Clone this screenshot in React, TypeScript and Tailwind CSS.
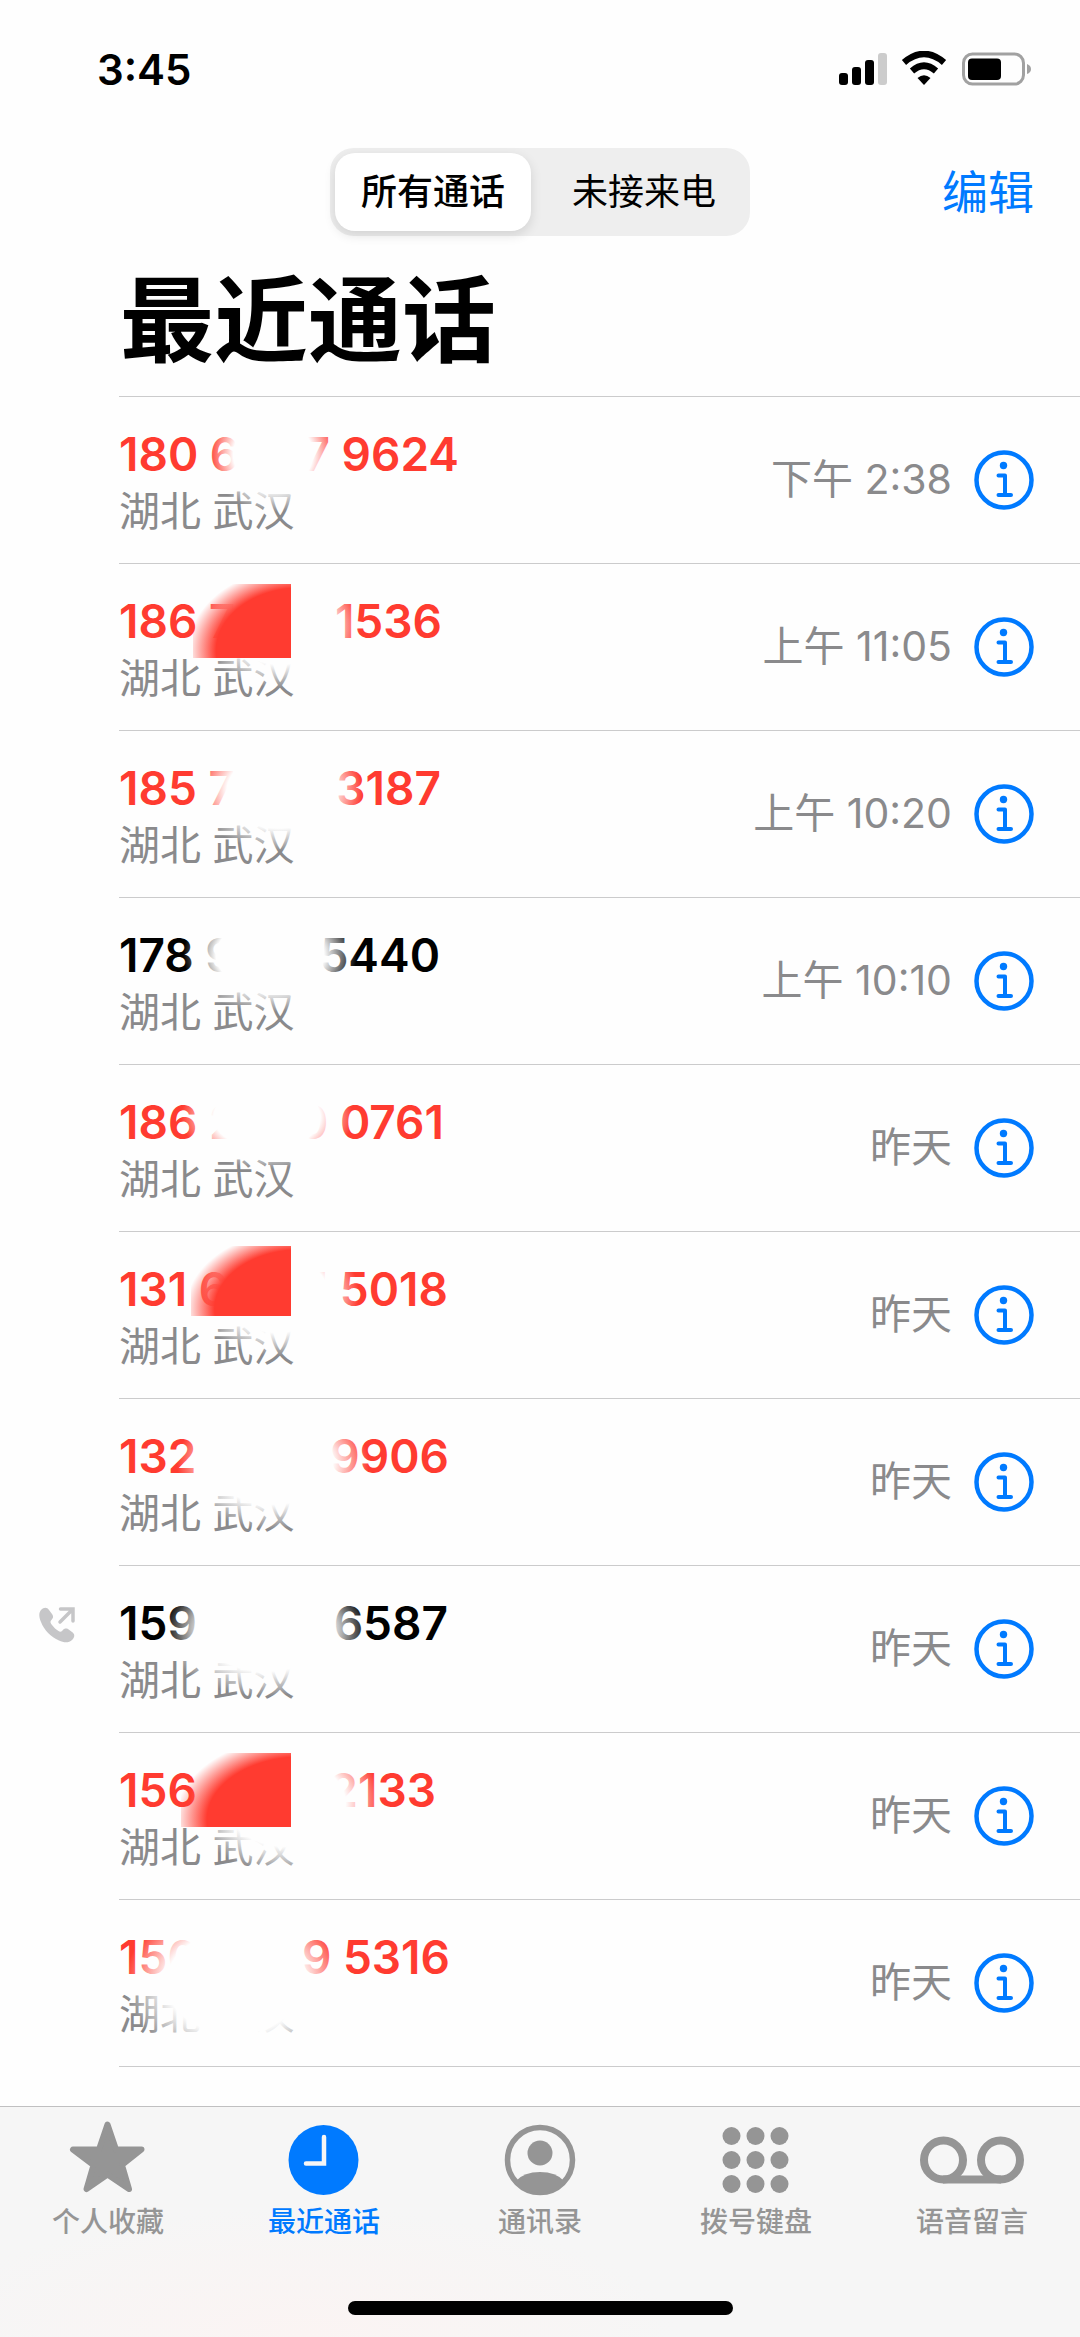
import { useState, ReactNode } from "react";

interface CallInterface {
    head: string,
    tail: string,
    time: string,
    missed: boolean,
    outgoing?: boolean,
    width: string,
    blur: string,
    blot?: string
}

interface TabInterface {
    name: string,
    icon: ReactNode
}

const calls: Array<CallInterface> = [
    { head: '180 6', tail: '7 9624', time: '下午 2:38', missed: true, width: 'w-[340px]', blur: 'left-[90px] top-0 w-[128px] h-[115px]' },
    { head: '186 7', tail: '1536', time: '上午 11:05', missed: true, width: 'w-[323px]', blur: 'left-[81px] top-0 w-[160px] h-[124px]', blot: 'left-[74px] top-[20px] w-[98px] h-[74px]' },
    { head: '185 7', tail: '3187', time: '上午 10:20', missed: true, width: 'w-[322px]', blur: 'left-[76px] top-0 w-[168px] h-[120px]' },
    { head: '178 9', tail: '5440', time: '上午 10:10', missed: false, width: 'w-[321px]', blur: 'left-[64px] top-0 w-[174px] h-[114px]' },
    { head: '186 2', tail: '0 0761', time: '昨天', missed: true, width: 'w-[325px]', blur: 'left-[62px] top-0 w-[172px] h-[104px]' },
    { head: '131 6', tail: '1 5018', time: '昨天', missed: true, width: 'w-[329px]', blur: 'left-[76px] top-0 w-[164px] h-[124px]', blot: 'left-[72px] top-[14px] w-[100px] h-[70px]' },
    { head: '132', tail: '1 9906', time: '昨天', missed: true, width: 'w-[330px]', blur: 'left-[58px] top-0 w-[192px] h-[130px]' },
    { head: '159', tail: '6587', time: '昨天', missed: false, outgoing: true, width: 'w-[329px]', blur: 'left-[44px] top-0 w-[206px] h-[130px]' },
    { head: '156', tail: '2133', time: '昨天', missed: true, width: 'w-[317px]', blur: 'left-[71px] top-0 w-[192px] h-[140px]', blot: 'left-[62px] top-[20px] w-[110px] h-[74px]' },
    { head: '150', tail: '9 5316', time: '昨天', missed: true, width: 'w-[331px]', blur: 'left-[6px] top-0 w-[220px] h-[165px]' },
]

const tabs: Array<TabInterface> = [
    {
        name: '个人收藏',
        icon: <svg width="80" height="80" viewBox="0 0 80 80" fill="currentColor" stroke="currentColor" strokeWidth="6" strokeLinejoin="round">
            <path d="M39.500 4.500 L48 29.500 H73.500 L54 45 L61 69 L39.500 54.500 L18.500 69 L25.500 45 L5 29.500 H31 Z" />
        </svg>
    },
    {
        name: '最近通话',
        icon: <svg width="80" height="80" viewBox="0 0 80 80" fill="none">
            <circle cx="39.500" cy="40" r="35" fill="currentColor" />
            <path d="M40 17 V43.500 H22" stroke="#f6f6f6" strokeWidth="4.500" strokeLinecap="round" />
        </svg>
    },
    {
        name: '通讯录',
        icon: <svg width="80" height="80" viewBox="0 0 80 80" fill="none">
            <circle cx="40" cy="40" r="32.500" stroke="currentColor" strokeWidth="5.500" />
            <circle cx="40" cy="33" r="12.500" fill="currentColor" />
            <path d="M16 61 Q24 52 40 52 Q56 52 64 61 Q54 73 40 73 Q26 73 16 61 Z" fill="currentColor" />
        </svg>
    },
    {
        name: '拨号键盘',
        icon: <svg width="80" height="80" viewBox="0 0 80 80" fill="currentColor">
            {[16, 40, 64].map((y) => [15.5, 39.5, 63.5].map((x) => (
                <circle key={`${x}-${y}`} cx={x} cy={y} r="9" />
            )))}
        </svg>
    },
    {
        name: '语音留言',
        icon: <svg width="108" height="80" viewBox="0 0 108 80" fill="none" stroke="currentColor" strokeWidth="8">
            <circle cx="25.500" cy="40" r="19.500" />
            <circle cx="82.500" cy="40" r="19.500" />
            <path d="M25 59.500 H83" />
        </svg>
    },
]

function StatusBar() {
    return (
        <div className="h-[138px] pl-[97px] pr-12 flex items-center justify-between">
            <span className="text-[42px] font-semibold">3:45</span>
            <svg width="194" height="36" viewBox="0 0 194 36">
                <rect x="1" y="22" width="9" height="12" rx="3" />
                <rect x="14" y="16" width="9" height="18" rx="3" />
                <rect x="27" y="9" width="9" height="25" rx="3" />
                <rect x="40" y="2" width="9" height="32" rx="3" fill="#cccccc" />
                <path d="M66 11.500 Q86 -5.500 106 11.500" fill="none" stroke="#000" strokeWidth="6.500" />
                <path d="M74 20 Q86 9.500 98 20" fill="none" stroke="#000" strokeWidth="6.500" />
                <path d="M79.500 27 Q86 21.500 92.500 27 L86 34 Z" />
                <rect x="125.500" y="3" width="60" height="30" rx="9" fill="none" stroke="#a1a1a1" strokeWidth="3" />
                <rect x="130" y="7.500" width="33" height="21.500" rx="4" />
                <path d="M189 13 Q193 14.500 193 18 Q193 21.500 189 23 Z" fill="#a1a1a1" />
            </svg>
        </div>
    )
}

function OutgoingIcon() {
    return (
        <svg width="38" height="38" viewBox="0 0 38 38" className="text-[#c6c6c8]">
            <path d="M3 4 C6 1 9 1 11 4 L14 8 C16 11 15 12 13 14.500 C12 16 12.500 17 14 19 C16 21.500 18 23.500 20.500 25 C22 26 23 26 24.500 24.500 C26 22.500 28 22 30 23 L34 26 C37 28 37 31 34 34 C31 37 26 37 21 34.500 C13 31 6 24 3 16 C1 11 0.500 7 3 4 Z" fill="currentColor" />
            <path d="M22.500 3 H35 V15 M34 4 L22 16" fill="none" stroke="currentColor" strokeWidth="3.500" strokeLinecap="round" />
        </svg>
    )
}

function InfoIcon() {
    return (
        <svg width="60" height="60" viewBox="0 0 60 60" fill="none" stroke="currentColor">
            <circle cx="30" cy="30" r="27.500" strokeWidth="4.500" />
            <circle cx="29.500" cy="15.500" r="3.700" fill="currentColor" stroke="none" />
            <path d="M24.500 25.500 H31 V45 M24.500 45 H37" strokeWidth="4" strokeLinecap="round" strokeLinejoin="round" />
        </svg>
    )
}

export default function App() {

    const [filter, setFilter] = useState('所有通话');
    const [activeTab, setActiveTab] = useState('最近通话');

    return (
        <div className="min-h-screen flex flex-col bg-[#fefefe] text-black font-['Inter','Noto_Sans_CJK_SC',sans-serif]">
            <StatusBar />

            {/* Navigation */}
            <header className="h-[108px] px-[46px] grid grid-cols-[1fr_420px_1fr] items-center">
                <div className="col-start-2 h-[88px] p-[5px] grid grid-cols-[196px_1fr] gap-3 rounded-3xl bg-[#eeeeee]">
                    {
                        ['所有通话', '未接来电'].map((e) => (
                            <button key={e} type="button" onClick={() => { setFilter(e) }}
                                className={`rounded-[20px] text-4xl ${filter == e ? 'bg-white font-medium shadow-[0_4px_12px_rgba(0,0,0,0.12)]' : ''}`}>
                                {e}
                            </button>
                        ))
                    }
                </div>
                <button type="button" className="justify-self-end text-[46px] text-[#007aff]">编辑</button>
            </header>
            {/* End of Navigation */}

            <h1 className="h-[150px] pl-[120px] text-[94px] leading-[150px] font-bold">最近通话</h1>

            <main className="flex-1">
                <div className="ml-[119px] h-px bg-[#cbcbcc]"></div>
                <ul>
                    {
                        calls.map((call) => (
                            <li key={call.tail} className="h-[167px] flex">
                                <div className="w-[119px] pt-10 pl-[38px]">
                                    {call.outgoing ? <OutgoingIcon /> : <></>}
                                </div>
                                <div className="relative flex-1 flex items-center border-b border-[#cbcbcc] pr-[46px]">
                                    <div className="flex-1 pt-[6px]">
                                        <div className={`flex justify-between text-[46px] leading-[57px] font-semibold ${call.width} ${call.missed ? 'text-[#ff3b30]' : 'text-black'}`}>
                                            <span>{call.head}</span>
                                            <span>{call.tail}</span>
                                        </div>
                                        <p className="text-[41px] leading-[57px] text-[#8a8a8c]">湖北 武汉</p>
                                    </div>
                                    <span className="mr-[22px] text-[41px] text-[#8a8a8c]">{call.time}</span>
                                    <button type="button" aria-label="详细信息" className="text-[#007aff]"><InfoIcon /></button>

                                    {/* Hidden digits */}
                                    <div className={`absolute bg-[radial-gradient(closest-side,#fefefe_62%,transparent)] ${call.blur}`}></div>
                                    {
                                        call.blot ? <div className={`absolute bg-[radial-gradient(120%_118%_at_110%_90%,#ff3b30_72%,transparent_96%)] ${call.blot}`}></div> : <></>
                                    }
                                </div>
                            </li>
                        ))
                    }
                </ul>
            </main>

            {/* Tab Bar */}
            <nav className="h-[231px] flex flex-col justify-between border-t border-[#c0c0c1] bg-[#f6f6f6] bg-[radial-gradient(380px_130px_at_28%_100%,#fbf4f3,transparent)]">
                <div className="grid grid-cols-5 pt-[13px]">
                    {
                        tabs.map((tab) => (
                            <button key={tab.name} type="button" onClick={() => { setActiveTab(tab.name) }}
                                className={`flex flex-col items-center gap-1 text-[28px] leading-9 font-medium ${activeTab == tab.name ? 'text-[#007aff]' : 'text-[#959595]'}`}>
                                {tab.icon}
                                {tab.name}
                            </button>
                        ))
                    }
                </div>
                <div className="mx-auto mb-[22px] h-[14px] w-[385px] rounded-full bg-black"></div>
            </nav>
            {/* End of Tab Bar */}
        </div>
    )
}
